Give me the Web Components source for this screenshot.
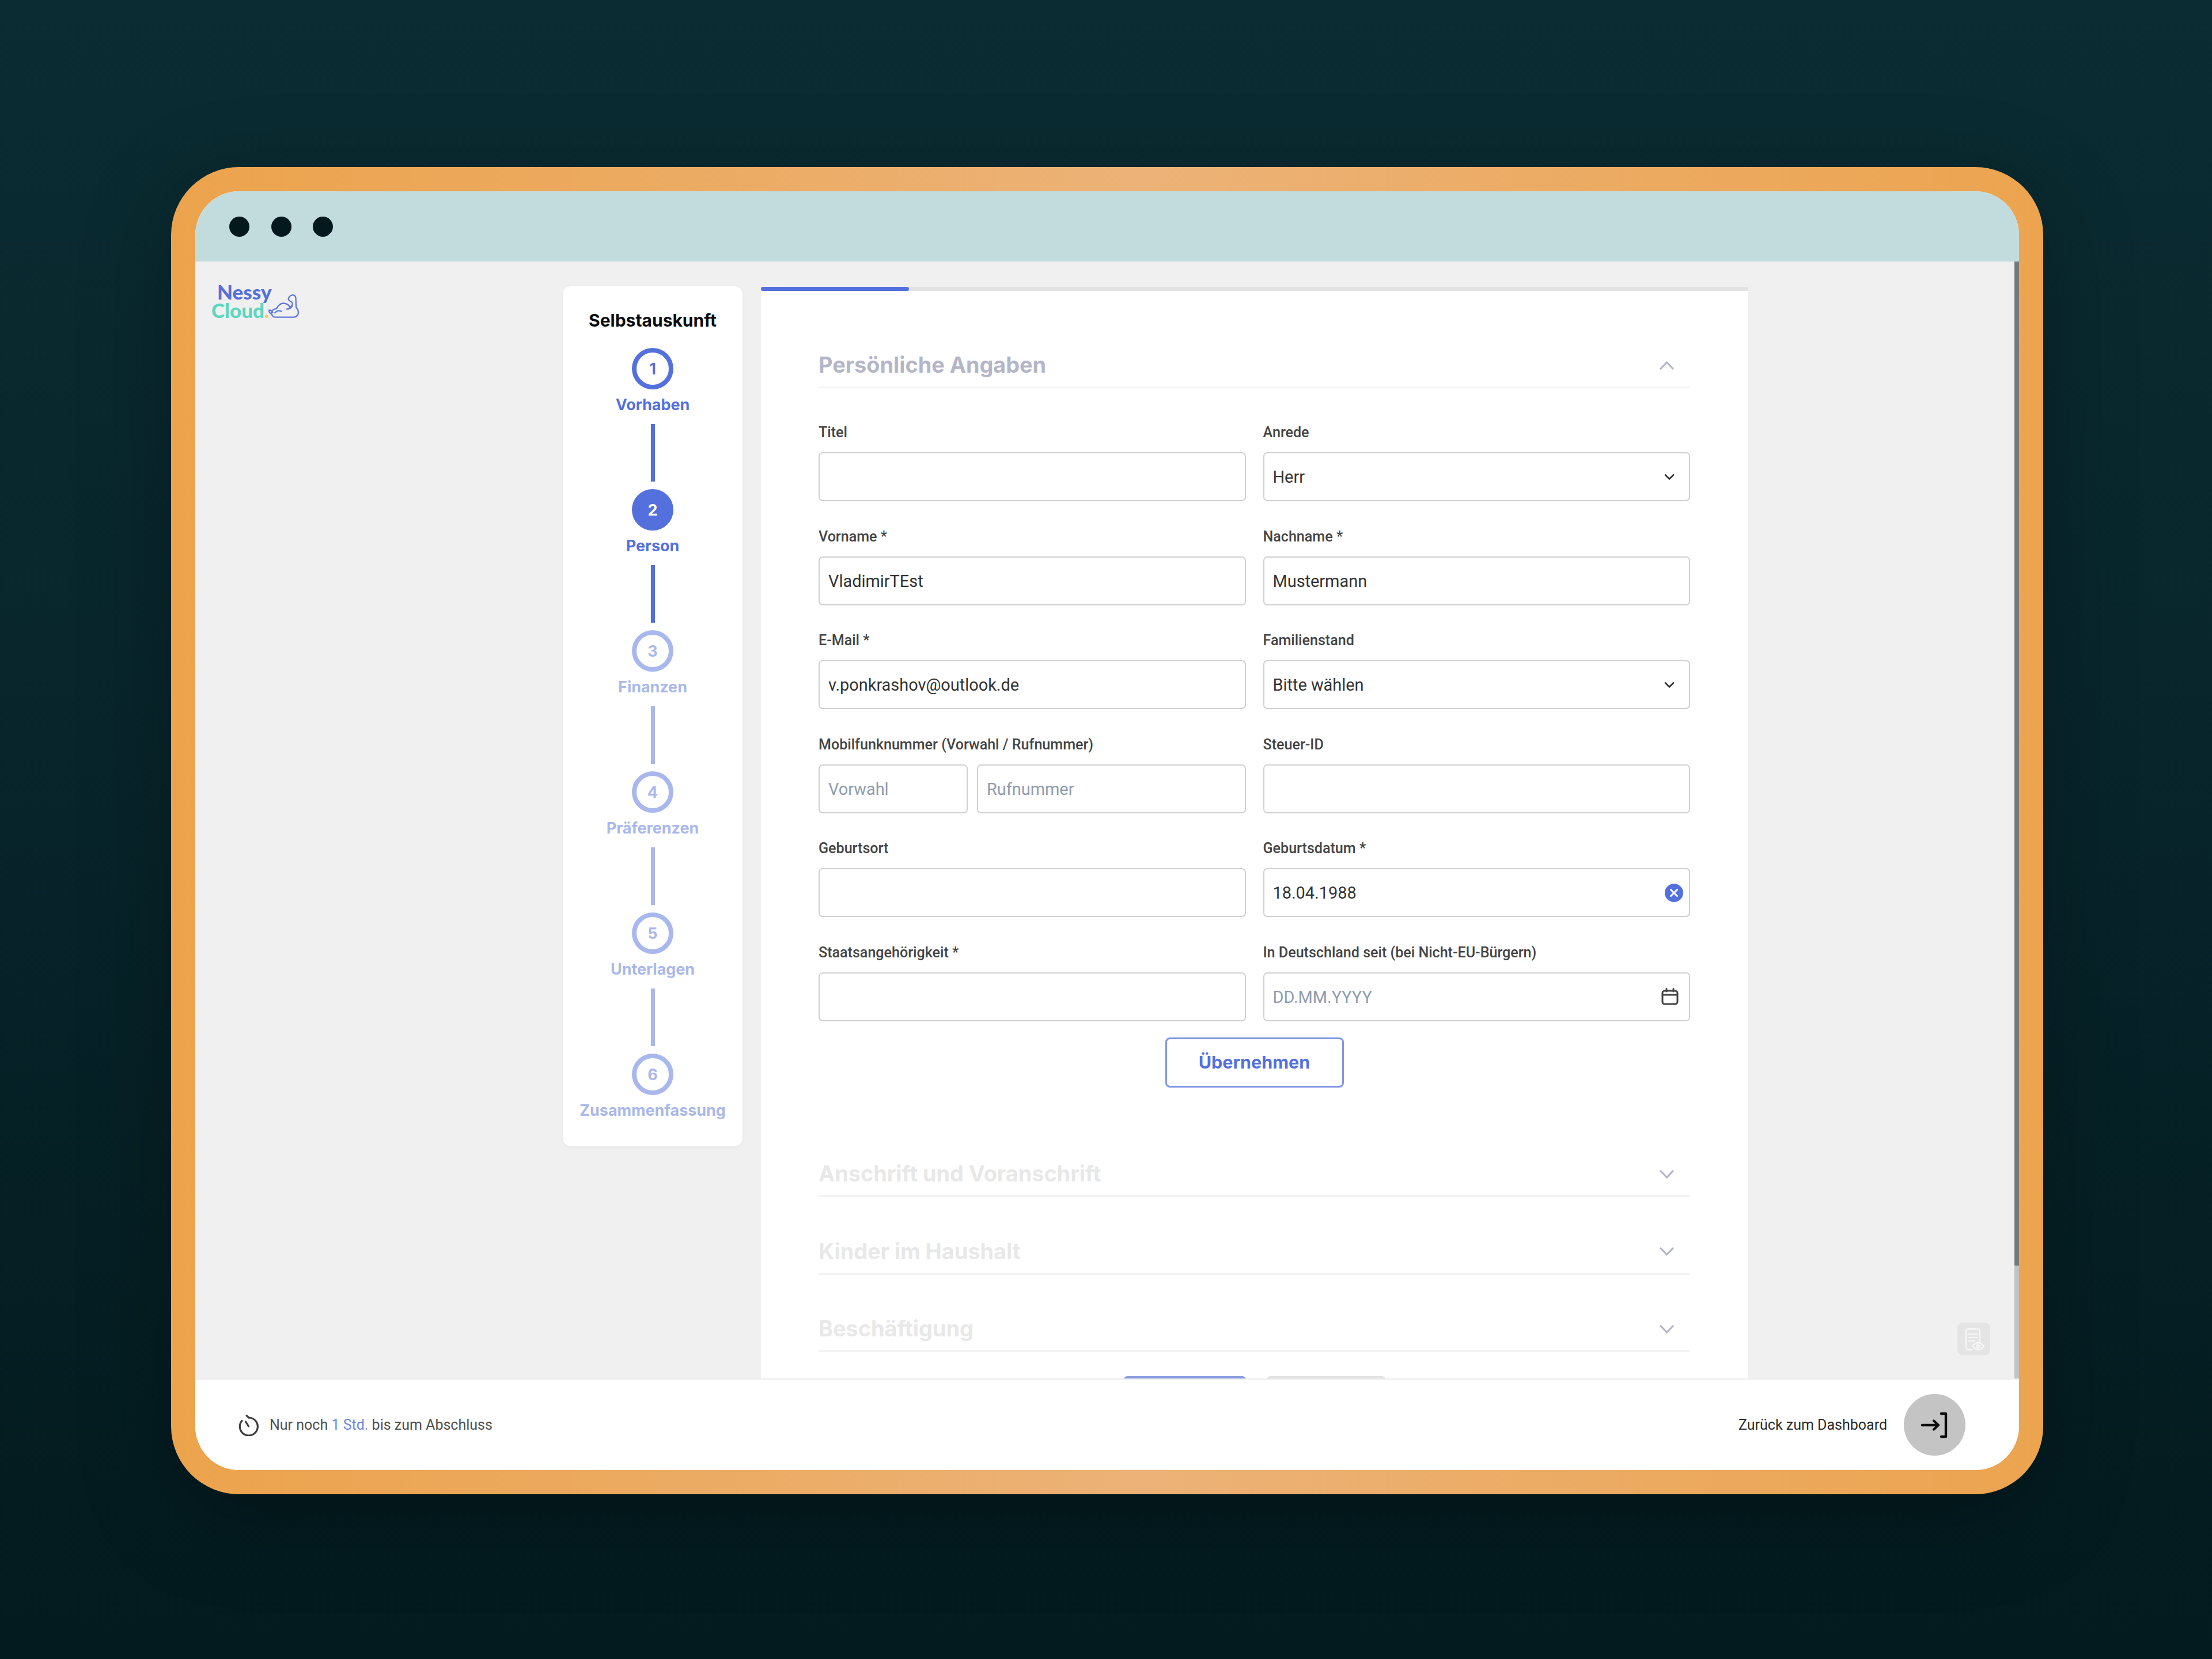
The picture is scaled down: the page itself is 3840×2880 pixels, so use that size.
<!DOCTYPE html>
<html lang="de">
<head>
<meta charset="utf-8">
<title>Selbstauskunft</title>
<style>
html, body { margin: 0; padding: 0; background: #04191e; }
</style>
</head>
<body>
<nessy-page>
  <browser-frame>
    <nessy-logo slot="logo"></nessy-logo>
    <step-rail slot="rail" heading="Selbstauskunft">
      <rail-step num="1" state="done" label="Vorhaben"></rail-step>
      <rail-step num="2" state="active" label="Person"></rail-step>
      <rail-step num="3" label="Finanzen"></rail-step>
      <rail-step num="4" label="Präferenzen"></rail-step>
      <rail-step num="5" label="Unterlagen"></rail-step>
      <rail-step num="6" label="Zusammenfassung" last></rail-step>
    </step-rail>
    <form-card slot="form">
      <section-head open>Persönliche Angaben</section-head>
      <field-grid>
        <form-field label="Titel"><text-box></text-box></form-field>
        <form-field label="Anrede"><text-box value="Herr" icon="chevron"></text-box></form-field>
        <form-field label="Vorname *"><text-box value="VladimirTEst"></text-box></form-field>
        <form-field label="Nachname *"><text-box value="Mustermann"></text-box></form-field>
        <form-field label="E-Mail *"><text-box value="v.ponkrashov@outlook.de"></text-box></form-field>
        <form-field label="Familienstand"><text-box value="Bitte wählen" icon="chevron"></text-box></form-field>
        <form-field label="Mobilfunknummer (Vorwahl / Rufnummer)" split>
          <text-box placeholder="Vorwahl"></text-box>
          <text-box placeholder="Rufnummer"></text-box>
        </form-field>
        <form-field label="Steuer-ID"><text-box></text-box></form-field>
        <form-field label="Geburtsort"><text-box></text-box></form-field>
        <form-field label="Geburtsdatum *"><text-box value="18.04.1988" icon="clear"></text-box></form-field>
        <form-field label="Staatsangehörigkeit *"><text-box></text-box></form-field>
        <form-field label="In Deutschland seit (bei Nicht-EU-Bürgern)"><text-box placeholder="DD.MM.YYYY" icon="calendar"></text-box></form-field>
      </field-grid>
      <outline-button>Übernehmen</outline-button>
      <section-head first>Anschrift und Voranschrift</section-head>
      <section-head>Kinder im Haushalt</section-head>
      <section-head>Beschäftigung</section-head>
    </form-card>
    <bottom-bar slot="footer"></bottom-bar>
  </browser-frame>
</nessy-page>

<script>
class NessyPage extends HTMLElement {
    constructor(){
        super()
        this.attachShadow({mode: 'open'})
        this.shadowRoot.innerHTML = `
        <style>
        :host{
            display:block;
            box-sizing:border-box;
            width:3840px;
            height:2880px;
            padding:290px 293px 0 297px;
            overflow:hidden;
            background:linear-gradient(180deg,#0a2c32 0%,#08262c 40%,#031a1e 100%);
            font-family:Roboto,"Liberation Sans",sans-serif;
        }
        </style>
        <slot></slot>`
    }
}

class BrowserFrame extends HTMLElement {
    constructor(){
        super()
        this.attachShadow({mode: 'open'})
        this.shadowRoot.innerHTML = `
        <style>
        :host{
            display:block;
            box-sizing:border-box;
            width:3250px;
            height:2304px;
            padding:42px;
            border-radius:118px;
            background:linear-gradient(90deg,#eca34c 0%,#ecb277 52%,#eca44f 100%);
            box-shadow:0 40px 160px rgba(0,0,0,.28);
        }
        .inner{
            height:100%;
            display:grid;
            grid-template-rows:122px 1939px 1fr;
            border-radius:76px;
            overflow:hidden;
            background:#fff;
        }
        .titlebar{
            display:flex;
            align-items:center;
            gap:37.5px;
            padding-left:59px;
            background:#c2dcdd;
        }
        .titlebar i{
            width:35px;
            height:35px;
            border-radius:50%;
            background:#04191e;
        }
        main{
            position:relative;
            overflow:hidden;
            display:grid;
            grid-template-columns:638px 312px 1714px;
            column-gap:0;
            padding-top:43px;
            background:#f0f0f0;
        }
        .rail{ grid-column:2; }
        .form{ grid-column:3; margin-left:32px; width:1714px; }
        .scroll{
            position:absolute;
            top:0;
            right:0;
            bottom:0;
            width:8px;
            background:#c2c2c2;
        }
        .scroll b{
            display:block;
            height:1743px;
            background:#73797c;
        }
        .doc{
            position:absolute;
            right:50px;
            bottom:40px;
            width:57px;
            height:57px;
            border-radius:9px;
            background:#e4e4e4;
        }
        </style>
        <div class="inner">
            <div class="titlebar"><i></i><i></i><i></i></div>
            <main>
                <div class="logo"><slot name="logo"></slot></div>
                <div class="rail"><slot name="rail"></slot></div>
                <div class="form"><slot name="form"></slot></div>
                <div class="scroll"><b></b></div>
                <div class="doc">
                    <svg width="57" height="57" viewBox="0 0 57 57" fill="none" stroke="#f6f6f6" stroke-width="2.6" stroke-linecap="round" stroke-linejoin="round">
                        <path d="M24 47h-5a4 4 0 0 1-4-4V15a4 4 0 0 1 4-4h16a4 4 0 0 1 4 4v19"/>
                        <path d="M20 20h14M20 26h14M20 32h9"/>
                        <path d="M26 41c3-4 7-6 10-6s7 2 10 6c-3 4-7 6-10 6s-7-2-10-6z"/>
                        <circle cx="36" cy="41" r="2.2"/>
                    </svg>
                </div>
            </main>
            <slot name="footer"></slot>
        </div>`
    }
}

class NessyLogo extends HTMLElement {
    constructor(){
        super()
        this.attachShadow({mode: 'open'})
        this.shadowRoot.innerHTML = `
        <style>
        :host{
            display:block;
            position:relative;
            margin:-6px 0 0 28px;
            font:900 35px/31.5px Lato,"Liberation Sans",sans-serif;
        }
        .nessy{ display:block; margin-left:10px; color:#5470dc; }
        .cloud{ display:flex; align-items:flex-end; color:#5dd6bf; }
        .cloud em{ font-style:normal; color:#f6cd5c; }
        svg{ display:block; margin:-14px 0 0 -1px; }
        </style>
        <span class="nessy">Nessy</span>
        <span class="cloud"><span>Cloud<em>.</em></span>
            <svg width="54" height="46" viewBox="0 0 58 48" fill="none" stroke="#5f78de" stroke-width="2.5" stroke-linecap="round" stroke-linejoin="round">
                <path d="M13 44H47C53 44 57 38 55.5 33C55 29 53 27 51.5 25L51 8C50 3 47 2 44 3C39 4 36 9 38 12C40 15 44 14 44.5 18C45 21 43 24 40 25.5C37 19 26 15 20 21.5C18 23 16 26 15 28.5C8 28 5 34 6 38C7 42 9 44 13 44Z"/>
                <path d="M12 36C15 32 20 31 24 33M34 29C38 29 42 28 45 22"/>
                <path d="M6 38C3 37 1 34 1 31C4 31 7 33 8 35"/>
            </svg>
        </span>`
    }
}

class StepRail extends HTMLElement {
    constructor(){
        super()
        this.attachShadow({mode: 'open'})
        this.shadowRoot.innerHTML = `
        <style>
        :host{
            display:block;
            box-sizing:border-box;
            width:312px;
            height:1493px;
            padding-top:39px;
            background:#fff;
            border-radius:14px;
            box-shadow:0 2px 6px rgba(0,0,0,.05);
            text-align:center;
        }
        h2{
            margin:0 0 28px;
            font:700 30px/40px Inter,"Liberation Sans",sans-serif;
            color:#0c0c0c;
        }
        </style>
        <h2>${this.getAttribute('heading')}</h2>
        <slot></slot>`
    }
}

class RailStep extends HTMLElement {
    constructor(){
        super()
        this.attachShadow({mode: 'open'})
        const state = this.getAttribute('state') || 'todo'
        const line = this.hasAttribute('last') ? '' : '<div class="line"></div>'
        this.shadowRoot.innerHTML = `
        <style>
        :host{
            display:flex;
            flex-direction:column;
            align-items:center;
            color:#a9b8ec;
            font-family:Inter,"Liberation Sans",sans-serif;
        }
        :host([state]){ color:#5470dc; }
        .dot{
            box-sizing:border-box;
            width:72px;
            height:72px;
            border:8px solid currentColor;
            border-radius:50%;
            display:flex;
            align-items:center;
            justify-content:center;
            font-weight:700;
            font-size:27px;
        }
        .active{ background:#5470dc; }
        .active span{ color:#fff; }
        .label{
            margin-top:8px;
            font-weight:700;
            font-size:26.9px;
            line-height:36px;
            white-space:nowrap;
        }
        .line{
            width:7px;
            height:100px;
            margin:16px 0 13px;
            background:currentColor;
        }
        </style>
        <div class="dot ${state}"><span>${this.getAttribute('num')}</span></div>
        <div class="label">${this.getAttribute('label')}</div>
        ${line}`
    }
}

class FormCard extends HTMLElement {
    constructor(){
        super()
        this.attachShadow({mode: 'open'})
        this.shadowRoot.innerHTML = `
        <style>
        :host{
            display:block;
            box-sizing:border-box;
            width:1714px;
            margin-top:1px;
            background:#fff;
        }
        .bar{
            height:7px;
            background:#e2e2e2;
        }
        .bar b{
            display:block;
            width:257px;
            height:7px;
            border-radius:4px;
            background:#5470dc;
        }
        .body{ padding:97px 101px 0 100px; }
        .tabs{
            display:flex;
            justify-content:center;
            gap:36px;
            margin-top:42px;
        }
        .tabs i{
            width:212px;
            height:60px;
            border-radius:6px 6px 0 0;
            border-top:4px solid #8a9be0;
        }
        .tabs i + i{ width:206px; border-top-color:#e3e3e3; }
        </style>
        <div class="bar"><b></b></div>
        <div class="body">
            <slot></slot>
            <div class="tabs"><i></i><i></i></div>
        </div>`
    }
}

class SectionHead extends HTMLElement {
    constructor(){
        super()
        this.attachShadow({mode: 'open'})
        const open = this.hasAttribute('open')
        const d = open ? 'M2 14 L12.5 3 L23 14' : 'M2 3 L12.5 14 L23 3'
        this.shadowRoot.innerHTML = `
        <style>
        :host{
            display:flex;
            align-items:center;
            justify-content:space-between;
            box-sizing:border-box;
            height:72px;
            padding:0 28px 5px 0;
            margin-top:62.5px;
            border-bottom:3px solid #f3f3f3;
            color:#e8e8e8;
            font:700 37.8px/1 Inter,"Liberation Sans",sans-serif;
        }
        :host([open]){ margin-top:0; color:#b4b6c8; }
        :host([first]){ margin-top:118px; }
        svg{ display:block; }
        </style>
        <span><slot></slot></span>
        <svg width="25" height="17" viewBox="0 0 25 17" fill="none" stroke="#b3b4c8" stroke-width="3.2" stroke-linecap="round" stroke-linejoin="round"><path d="${d}"/></svg>`
    }
}

class FieldGrid extends HTMLElement {
    constructor(){
        super()
        this.attachShadow({mode: 'open'})
        this.shadowRoot.innerHTML = `
        <style>
        :host{
            display:grid;
            grid-template-columns:1fr 1fr;
            column-gap:30px;
            row-gap:45.5px;
            margin-top:61px;
        }
        </style>
        <slot></slot>`
    }
}

class FormField extends HTMLElement {
    constructor(){
        super()
        this.attachShadow({mode: 'open'})
        this.shadowRoot.innerHTML = `
        <style>
        :host{ display:block; min-width:0; }
        label{
            display:block;
            height:32px;
            margin-bottom:18px;
            font:500 25.1px/32px Roboto,"Liberation Sans",sans-serif;
            color:#444;
            white-space:nowrap;
        }
        .boxes{ display:flex; gap:16px; }
        </style>
        <label>${this.getAttribute('label')}</label>
        <div class="boxes"><slot></slot></div>`
    }
}

const ICONS = {
    chevron: `<svg width="18" height="12" viewBox="0 0 18 12" fill="none" stroke="#333" stroke-width="2.8" stroke-linecap="round" stroke-linejoin="round"><path d="M2 2.5 L9 9.5 L16 2.5"/></svg>`,
    clear: `<svg width="32" height="32" viewBox="0 0 32 32" style="margin-right:-15px"><circle cx="16" cy="16" r="16" fill="#5470dc"/><path d="M10.5 10.5 L21.5 21.5 M21.5 10.5 L10.5 21.5" stroke="#fff" stroke-width="3" stroke-linecap="round"/></svg>`,
    calendar: `<svg width="30" height="30" viewBox="0 0 30 30" style="margin-right:-7px" fill="none" stroke="#444" stroke-width="3" stroke-linecap="round" stroke-linejoin="round"><rect x="2" y="5" width="26" height="23" rx="4"/><path d="M2 12 H28 M9 1.5 V6 M21 1.5 V6"/></svg>`
}

class TextBox extends HTMLElement {
    constructor(){
        super()
        this.attachShadow({mode: 'open'})
        const value = this.getAttribute('value')
        const placeholder = this.getAttribute('placeholder')
        const icon = this.getAttribute('icon')
        this.shadowRoot.innerHTML = `
        <style>
        :host{
            display:flex;
            flex:1 1 0;
            align-items:center;
            justify-content:space-between;
            box-sizing:border-box;
            height:85px;
            min-width:0;
            padding:0 25px 0 15px;
            background:#fff;
            border:2.5px solid #d0d0d0;
            border-radius:7px;
            font:400 28.9px/1 Roboto,"Liberation Sans",sans-serif;
            color:#333;
        }
        :host([placeholder="Vorwahl"]){ flex:0 0 259px; }
        span{ padding-top:2px; }
        .ph{ color:#8e9bb0; }
        svg{ display:block; }
        </style>
        <span class="${placeholder ? 'ph' : ''}">${value || placeholder || ''}</span>
        ${icon ? ICONS[icon] : ''}`
    }
}

class OutlineButton extends HTMLElement {
    constructor(){
        super()
        this.attachShadow({mode: 'open'})
        this.shadowRoot.innerHTML = `
        <style>
        :host{
            display:flex;
            align-items:center;
            justify-content:center;
            box-sizing:border-box;
            width:310px;
            height:87px;
            margin:28.5px auto 0;
            border:3.5px solid #8196e6;
            border-radius:8px;
            background:#fff;
            color:#5470dc;
            font:700 30.5px/1 Inter,"Liberation Sans",sans-serif;
        }
        </style>
        <slot></slot>`
    }
}

class BottomBar extends HTMLElement {
    constructor(){
        super()
        this.attachShadow({mode: 'open'})
        this.shadowRoot.innerHTML = `
        <style>
        :host{
            display:flex;
            align-items:center;
            justify-content:space-between;
            box-sizing:border-box;
            padding:0 93px 0 74px;
            background:#fff;
            border-top:2px solid #ececec;
            font:400 25px/1 Roboto,"Liberation Sans",sans-serif;
            color:#4e4e4e;
        }
        .left, .right{ display:flex; align-items:center; }
        .left{ gap:17px; }
        .left b{ font-weight:400; color:#6f86e0; }
        .right{ gap:29px; color:#2b2b2b; }
        .exit{
            width:107px;
            height:107px;
            border-radius:50%;
            background:#c4c4c4;
            display:flex;
            align-items:center;
            justify-content:center;
        }
        svg{ display:block; }
        </style>
        <div class="left">
            <svg width="38" height="38" viewBox="0 0 38 38" fill="none" stroke="#3d3d3d" stroke-width="3.2" stroke-linecap="round" stroke-linejoin="round">
                <path d="M19 6 A15.5 15.5 0 1 1 7 11.5"/>
                <path d="M19 6 L15 2.5 M18.5 21 L13.5 13"/>
            </svg>
            <span>Nur noch <b>1 Std.</b> bis zum Abschluss</span>
        </div>
        <div class="right">
            <span>Zurück zum Dashboard</span>
            <div class="exit">
                <svg width="49" height="46" viewBox="0 0 49 46" fill="none" stroke="#0d0d0d" stroke-width="4.4" stroke-linecap="round" stroke-linejoin="round">
                    <path d="M3 23 H30 M23 15.5 L31 23 L23 30.5"/>
                    <path d="M36 3 H44 V43 H36"/>
                </svg>
            </div>
        </div>`
    }
}

customElements.define('nessy-page', NessyPage)
customElements.define('browser-frame', BrowserFrame)
customElements.define('nessy-logo', NessyLogo)
customElements.define('step-rail', StepRail)
customElements.define('rail-step', RailStep)
customElements.define('form-card', FormCard)
customElements.define('section-head', SectionHead)
customElements.define('field-grid', FieldGrid)
customElements.define('form-field', FormField)
customElements.define('text-box', TextBox)
customElements.define('outline-button', OutlineButton)
customElements.define('bottom-bar', BottomBar)
</script>
</body>
</html>
